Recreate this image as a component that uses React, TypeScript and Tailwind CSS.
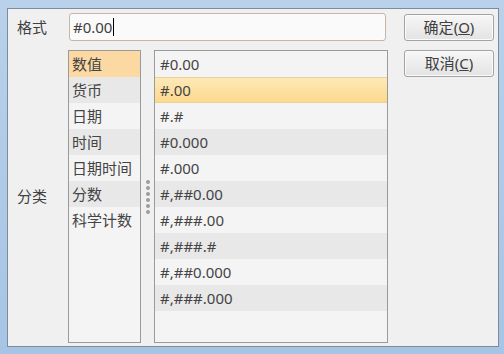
import React from "react";

const categories = ["数值", "货币", "日期", "时间", "日期时间", "分数", "科学计数"];
const formats = [
  "#0.00",
  "#.00",
  "#.#",
  "#0.000",
  "#.000",
  "#,##0.00",
  "#,###.00",
  "#,###.#",
  "#,##0.000",
  "#,###.000",
];

const font = { fontFamily: '"Noto Sans", "Noto Sans CJK SC", sans-serif' };

function Button({ label, hotkey }: { label: string; hotkey: string }) {
  return (
    <button className="w-[90px] h-[27px] rounded-[3px] border border-[#a3a3a3] bg-gradient-to-b from-[#f7f7f7] to-[#e3e3e3] text-[15px] text-[#404040] leading-none flex items-center justify-center shadow-[inset_0_0_0_1px_#fbfbfb]">
      {label}(<span className="underline underline-offset-1">{hotkey}</span>)
    </button>
  );
}

export default function App() {
  return (
    <div
      className="w-[504px] h-[354px] bg-gradient-to-b from-[#b9d1ea] to-[#a6c4e4] pl-[7px] pt-[8px] pr-[5px] pb-[7px]"
      style={font}
    >
      <div className="w-full h-full border border-[#7d8c9c] bg-[#f0f0f0] flex">
        <div className="w-[380px] flex flex-col">
          {/* format input row */}
          <div className="flex items-center mt-[4px] h-[28px]">
            <div className="w-[61px] pl-[9px] text-[15px] text-[#404040]">格式</div>
            <div className="w-[317px] h-[28px] rounded-[3px] border border-[#c4b6aa] bg-[#fafafa] flex items-center pl-[3px] text-[15px] text-[#404040]">
              #0.00<span className="w-px h-[18px] bg-black ml-[1px]" />
            </div>
          </div>

          {/* lists row */}
          <div className="flex mt-[9px] h-[293px]">
            <div className="w-[60px] pl-[9px] flex items-center text-[15px] text-[#404040]">分类</div>
            <div className="w-[73px] h-full border border-[#9a9a9a] bg-[#f4f4f4]">
              {categories.map((c, i) => (
                <div
                  key={c}
                  className={`h-[26px] flex items-center pl-[3px] text-[15px] text-[#444] ${
                    i === 0 ? "bg-[#fcd9a3]" : i % 2 ? "bg-[#e8e8e8]" : ""
                  }`}
                >
                  {c}
                </div>
              ))}
            </div>
            <div className="w-[13px] flex flex-col items-center justify-center gap-[2px]">
              {[0, 1, 2, 3, 4, 5].map((d) => (
                <div key={d} className="w-[4px] h-[4px] rounded-full bg-[#9c9c9c]" />
              ))}
            </div>
            <div className="w-[234px] h-full border border-[#9a9a9a] bg-[#f4f4f4]">
              {formats.map((f, i) => (
                <div
                  key={f}
                  className={`h-[26px] flex items-center pl-[5px] text-[15px] text-[#444] ${
                    i === 1
                      ? "bg-gradient-to-b from-[#fde9b8] to-[#fcd98c] border-y border-[#ecd29a]"
                      : i % 2
                      ? "bg-[#e8e8e8]"
                      : ""
                  }`}
                >
                  {f}
                </div>
              ))}
            </div>
          </div>
        </div>

        {/* buttons */}
        <div className="ml-[16px] mt-[5px] flex flex-col gap-[9px]">
          <Button label="确定" hotkey="O" />
          <Button label="取消" hotkey="C" />
        </div>
      </div>
    </div>
  );
}
